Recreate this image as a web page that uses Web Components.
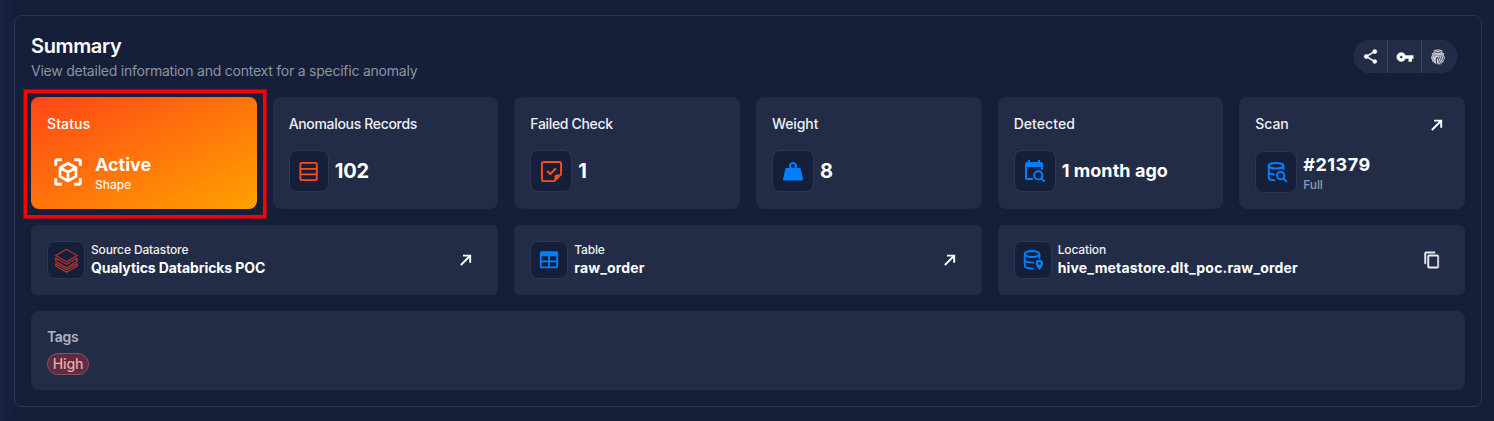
<!DOCTYPE html>
<html lang="en"><head><meta charset="utf-8"><title>Anomaly summary</title>
<style>
html{background:#151f3a}
body{margin:0;height:421px;overflow:hidden;background:linear-gradient(90deg,#18233f,#151f3a 14px);font-family:Inter,"Open Sans",sans-serif;color:#fff}
</style></head><body>
<summary-panel></summary-panel>
<script>
const define=(name,html,setup)=>{
  const t=document.createElement('template');t.innerHTML=html;
  customElements.define(name,class extends HTMLElement{
    connectedCallback(){
      if(this.shadowRoot)return;
      this.attachShadow({mode:'open'}).append(t.content.cloneNode(true));
      if(setup)setup(this,this.shadowRoot);
    }
  });
};
/* Single-line label: size, weight and target line length come from attributes */
define('ui-text',`<style>:host{display:block;white-space:nowrap;line-height:1.2}span{display:inline-block}</style><span><slot></slot></span>`,(el,root)=>{
  const g=k=>el.getAttribute(k),span=root.querySelector('span');
  el.style.fontSize=g('size')+'px';
  el.style.fontWeight=g('weight')||500;
  if(g('color'))el.style.color=g('color');
  const n=el.textContent.length,w=span.getBoundingClientRect().width;
  if(g('w')&&w)span.style.letterSpacing=((+g('w')+.3-w)/n).toFixed(3)+'px';
});
const icons={
 scan:['#fff','<g fill="none" stroke="currentColor" stroke-width="2.400" stroke-linejoin="round"><path d="M2.200 7V3.400A1.200 1.200 0 0 1 3.400 2.200H7M17 2.200h3.600A1.200 1.200 0 0 1 21.800 3.400V7M21.800 17v3.600A1.200 1.200 0 0 1 20.600 21.800H17M7 21.800H3.400A1.200 1.200 0 0 1 2.200 20.600V17"/><path d="M12 5 18.400 8.600v6.900L12 19.200 5.600 15.500V8.600zM5.600 8.600 12 12.200l6.400-3.600M12 12.200v7" stroke-width="2.100"/></g>'],
 rows:['#ff4c18','<g fill="none" stroke="currentColor" stroke-width="1.900"><rect x="3.500" y="3" width="17.200" height="18" rx="1.800"/><path d="M3.500 9.300h17M3.500 15h17"/></g>'],
 check:['#ff4c18','<path fill="none" stroke="currentColor" stroke-width="2" stroke-linejoin="round" d="M15 22H4a2 2 0 0 1-2-2V4a2 2 0 0 1 2-2h16a2 2 0 0 1 2 2v11z"/><path fill="currentColor" d="M15 22v-4a3 3 0 0 1 3-3h4z"/><path fill="none" stroke="currentColor" stroke-width="2.200" d="m7.500 11.500 3.200 3.200 6-6"/>'],
 weight:['#007fff','<path fill="currentColor" fill-rule="evenodd" d="M12 3a4 4 0 0 0-3.450 6H5.800a1.500 1.500 0 0 0-1.450 1.100L2 20.200A1.300 1.300 0 0 0 3.300 21.500h17.400a1.300 1.300 0 0 0 1.300-1.300l-2.350-10.100A1.500 1.500 0 0 0 18.200 9h-2.750A4 4 0 0 0 12 3m0 2a2 2 0 1 1 0 4 2 2 0 0 1 0-4"/>'],
 calendar:['#007fff','<path fill="currentColor" d="M10 21H4a2 2 0 0 1-2-2V5a2 2 0 0 1 2-2h1V1h2v2h8V1h2v2h1a2 2 0 0 1 2 2v6h-2V8H4v11h6z"/><g fill="none" stroke="currentColor" stroke-width="2"><circle cx="15.300" cy="16.400" r="4.100"/><path d="m18.200 19.400 3.400 3.400"/></g>'],
 dbsearch:['#007fff','<g fill="none" stroke="currentColor" stroke-width="2.200" stroke-linecap="round"><ellipse cx="11" cy="5.200" rx="8" ry="3"/><path d="M3 5.500V18c0 1.700 2.800 3 6.200 3M3 11.700c0 1.300 2.200 2.500 5.700 2.900M19 5.500V9"/><circle cx="16" cy="16" r="4"/><path d="m19 19 3.200 3.200"/></g>'],
 dbpin:['#007fff','<g fill="none" stroke="currentColor" stroke-width="2.100"><ellipse cx="11" cy="5.500" rx="8" ry="3.300"/><path d="M3 5.500V18c0 2 3.800 3.300 9.500 3.300M3 11.700c0 2 4.500 3.400 10 3.100M19 5.500v5"/></g><path fill="currentColor" fill-rule="evenodd" d="M19 11.700a4 4 0 0 0-4 4c0 2.900 4 7.300 4 7.300s4-4.400 4-7.300a4 4 0 0 0-4-4m0 2.500a1.500 1.500 0 1 1 0 3 1.500 1.500 0 0 1 0-3"/>'],
 table:['#007fff','<path fill="currentColor" fill-rule="evenodd" d="M4 2.500h16a2 2 0 0 1 2 2v14.500a2 2 0 0 1-2 2H4a2 2 0 0 1-2-2V4.500a2 2 0 0 1 2-2m0 5.500v4.500h7V8zm9 0v4.500h7V8zM4 14.500V19h7v-4.500zm9 0V19h7v-4.500z"/>'],
 bricks:['#bd302c','<g fill="none" stroke="currentColor" stroke-width="1.150" stroke-linejoin="round"><path d="M1.700 7.300 12 1.300l10.200 6L12 13.200zM1.700 9.700 12 15.600l10.200-5.900v3.200L12 18.900 1.700 12.900zM1.700 15 12 20.900l10.200-5.900v2.200L12 23.200 1.700 17.200z"/></g>'],
 share:['#fff','<path fill="currentColor" d="M18 16.080c-.76 0-1.440.3-1.960.77L8.910 12.700c.05-.23.090-.46.090-.7s-.04-.47-.09-.7l7.050-4.110c.54.5 1.250.81 2.040.81a3 3 0 1 0-3-3c0 .24.040.47.090.7L8.040 9.810A3 3 0 1 0 6 15c.79 0 1.500-.31 2.040-.81l7.120 4.160c-.05.21-.08.43-.08.65A2.920 2.920 0 1 0 18 16.080" stroke="currentColor" stroke-width=".6"/>'],
 key:['#fff','<path fill="currentColor" fill-rule="evenodd" stroke="currentColor" stroke-width=".6" d="M12.650 10a6 6 0 1 0 0 4H17v4h4v-4h2v-4zM7 14a2 2 0 1 1 0-4 2 2 0 0 1 0 4"/>'],
 finger:['#d9dce2','<g fill="none" stroke="currentColor" stroke-width="1.550" stroke-linecap="round"><path d="M6 3q6-3 12 0M3.300 7.500q8.700-7.600 17.400 0M2.500 14.500C1.500 3.500 22.500 3.500 21.500 14.500M4.200 18.500C2.500 6 19 5 18.800 13.500q.2 3 1.300 4M6.500 20.500C3.500 9.500 16 7.200 16.300 14q0 4 3 5.500M9 22C6.500 16 7.500 11.300 11 11.300c4.500 0 1.500 6.200 6 9.700M12.300 22.700Q10.500 19 11 14.500q1 6 4 8"/></g>'],
 arrow:['#fff','<path fill="none" stroke="currentColor" stroke-width="2.800" d="M4.300 19.500 17.800 6M7.500 5.400h10.800v10.800"/>'],
 copy:['#e8eaee','<path fill="currentColor" stroke="currentColor" stroke-width=".6" d="M19 21H8V7h11m0-2H8a2 2 0 0 0-2 2v14a2 2 0 0 0 2 2h11a2 2 0 0 0 2-2V7a2 2 0 0 0-2-2m-3-4H4a2 2 0 0 0-2 2v14h2V3h12z" fill-rule="evenodd"/>']
};
define('ui-icon',`<style>:host{display:block;flex:none}svg{display:block;width:100%;height:100%}</style><svg viewBox="0 0 24 24"></svg>`,(el,root)=>{
  const [c,p]=icons[el.getAttribute('name')],s=el.getAttribute('size')||24;
  el.style.width=el.style.height=s+'px';el.style.color=c;root.querySelector('svg').innerHTML=p;
});
define('icon-tile',`<style>:host{display:flex;align-items:center;justify-content:center;box-sizing:border-box;flex:none;width:var(--tile-w,var(--tile,42px));height:var(--tile,42px);padding-left:var(--nudge,0);border:1px solid #2d3751;border-radius:8px;background:#151f3a}:host([plain]){background:none;border-color:transparent}</style><slot></slot>`);
define('stat-card',`<style>
:host{display:flex;flex-direction:column;box-sizing:border-box;height:112px;padding:18.500px 16px 0;border-radius:8px;background:#232c46;position:relative}
:host([active]){background:linear-gradient(to bottom right,#ff4616,#ffa200)}
header{display:flex;justify-content:space-between;height:17px}
.body{display:flex;align-items:center;gap:6px;height:42px;margin-top:17.500px}
:host([sub]) .body{margin-top:18.500px}
:host([sub]) .copy{display:flex;flex-direction:column;gap:3px;padding-top:2px}
</style><header><slot name="label"></slot><slot name="action"></slot></header><div class="body"><slot name="icon"></slot><div class="copy"><slot></slot></div></div>`);
define('link-card',`<style>
:host{--tile:38px;display:flex;align-items:center;box-sizing:border-box;height:70px;padding:0 24px 0 16px;border-radius:6px;background:#232c46;grid-column:span 2;gap:6px}
.copy{flex:1;display:flex;flex-direction:column;gap:2px}
</style><slot name="icon"></slot><div class="copy"><slot></slot></div><slot name="action"></slot>`);
define('tool-bar',`<style>:host{display:grid;grid-template-columns:33px 33px 35px;column-gap:1px;height:33px;border-radius:17px;overflow:hidden;background:#3b455e}div{display:flex;align-items:center;justify-content:center;background:#232c46}div:last-child{padding-right:3px}div:first-child{padding-right:1px}</style>
<div><ui-icon name="share" size="17"></ui-icon></div><div><ui-icon name="key" size="18"></ui-icon></div><div><ui-icon name="finger" size="16"></ui-icon></div>`);
define('tag-list',`<style>:host{display:block;box-sizing:border-box;height:79px;padding:18px 16px 0;border-radius:8px;background:#232c46;grid-column:1/-1}
.tag{display:flex;align-items:center;justify-content:center;box-sizing:border-box;width:42px;height:22px;padding-top:1px;margin-top:7px;border:1px solid #92505c;border-radius:11px;background:#5d2c40}</style>
<ui-text size="14" weight="600" w="31" color="#b0b4bd">Tags</ui-text><div class="tag"><ui-text size="14" w="30" color="#eda9ad">High</ui-text></div>`);
define('focus-frame',`<style>:host{position:absolute;left:-8px;top:-8px;right:-10px;bottom:-10px;border:1px solid #960b1b;box-shadow:inset 0 0 0 3px #f00;box-sizing:border-box}</style>`);
define('summary-panel',`<style>
:host{display:block;box-sizing:border-box;width:1468px;height:392px;margin:15px 0 0 14px;padding:0 16px;border:1px solid #2d3751;border-radius:8px}
.head{display:flex;justify-content:space-between;height:81px;box-sizing:border-box;padding:18px 8px 0 0}
.head tool-bar{margin-top:6px}.sub{margin-top:5px}
.grid{display:grid;grid-template-columns:repeat(6,1fr);gap:16px}
.arrow{margin:1.500px 4.500px 0 0}
</style>
<div class="head"><div><ui-text size="20" weight="600" w="90">Summary</ui-text><ui-text class="sub" size="14" weight="400" w="386" color="#8e939f">View detailed information and context for a specific anomaly</ui-text></div><tool-bar></tool-bar></div>
<div class="grid">
<stat-card active sub><focus-frame slot="label"></focus-frame><ui-text slot="label" size="14" w="43">Status</ui-text><icon-tile plain slot="icon"><ui-icon name="scan" size="30"></ui-icon></icon-tile><ui-text size="18" weight="700" w="56">Active</ui-text><ui-text size="12" w="36" color="#fff0e6">Shape</ui-text></stat-card>
<stat-card style="--tile-w:40px"><ui-text slot="label" size="14" w="128" color="#eff0f3">Anomalous Records</ui-text><icon-tile slot="icon"><ui-icon name="rows" size="23"></ui-icon></icon-tile><ui-text size="20" weight="700" w="34">102</ui-text></stat-card>
<stat-card><ui-text slot="label" size="14" w="82" color="#eff0f3">Failed Check</ui-text><icon-tile slot="icon"><ui-icon name="check" size="23"></ui-icon></icon-tile><ui-text size="20" weight="700" w="9">1</ui-text></stat-card>
<stat-card><ui-text slot="label" size="14" w="46" color="#eff0f3">Weight</ui-text><icon-tile slot="icon"><ui-icon name="weight" size="24"></ui-icon></icon-tile><ui-text size="20" weight="700" w="12">8</ui-text></stat-card>
<stat-card style="--nudge:1px"><ui-text slot="label" size="14" w="61" color="#eff0f3">Detected</ui-text><icon-tile slot="icon"><ui-icon name="calendar" size="24"></ui-icon></icon-tile><ui-text size="18" weight="700" w="106">1 month ago</ui-text></stat-card>
<stat-card sub style="--nudge:1px"><ui-text slot="label" size="14" w="33" color="#eff0f3">Scan</ui-text><ui-icon slot="action" class="arrow" name="arrow" size="16"></ui-icon><icon-tile slot="icon"><ui-icon name="dbsearch" size="22"></ui-icon></icon-tile><ui-text size="18" weight="700" w="67">#21379</ui-text><ui-text size="12" w="19" color="#9499a5">Full</ui-text></stat-card>
<link-card><icon-tile slot="icon"><ui-icon name="bricks" size="25"></ui-icon></icon-tile><ui-text size="12" w="97" color="#eff0f3">Source Datastore</ui-text><ui-text size="14" weight="700" w="174">Qualytics Databricks POC</ui-text><ui-icon slot="action" name="arrow" size="16"></ui-icon></link-card>
<link-card><icon-tile slot="icon"><ui-icon name="table" size="22"></ui-icon></icon-tile><ui-text size="12" w="30" color="#eff0f3">Table</ui-text><ui-text size="14" weight="700" w="70">raw_order</ui-text><ui-icon slot="action" name="arrow" size="16"></ui-icon></link-card>
<link-card><icon-tile slot="icon"><ui-icon name="dbpin" size="22"></ui-icon></icon-tile><ui-text size="12" w="48" color="#eff0f3">Location</ui-text><ui-text size="14" weight="700" w="240">hive_metastore.dlt_poc.raw_order</ui-text><ui-icon slot="action" name="copy" size="18"></ui-icon></link-card>
<tag-list></tag-list>
</div>`);
</script></body></html>
